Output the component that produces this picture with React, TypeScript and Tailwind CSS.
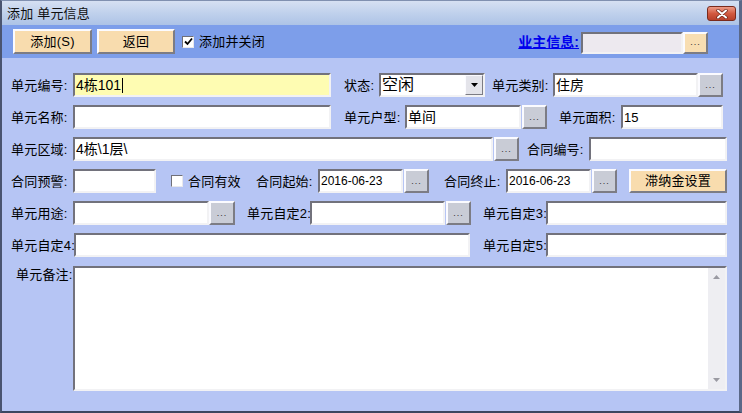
import React from 'react';

const inset =
  'border-2 border-t-[#72727c] border-l-[#72727c] border-b-[#f2f2f4] border-r-[#f2f2f4]';
const raised =
  'border-2 border-t-[#fbfbff] border-l-[#fbfbff] border-b-[#7c7c84] border-r-[#7c7c84]';

const Label: React.FC<{ className: string; children: React.ReactNode }> = ({ className, children }) => (
  <div className={`shrink-0 whitespace-nowrap text-[13px] leading-none tracking-[0.2px] text-black ${className}`}>
    {children}
  </div>
);

const TextBox: React.FC<{ className: string; children?: React.ReactNode }> = ({ className, children }) => (
  <div className={`flex h-full shrink-0 items-center overflow-hidden whitespace-nowrap pl-[1px] leading-none text-black ${inset} ${className}`}>
    {children}
  </div>
);

const Dots: React.FC<{ className?: string; peach?: boolean }> = ({ className = '', peach }) => (
  <div
    className={`flex h-full shrink-0 items-end justify-center pb-[5px] text-[9px] leading-none tracking-[1px] text-[#303030] ${raised} ${
      peach ? 'bg-[#f8deb2]' : 'bg-[#c9ccd6]'
    } ${className}`}
  >
    ...
  </div>
);

const CheckBox: React.FC<{ checked?: boolean }> = ({ checked }) => (
  <div className="flex h-[12px] w-[12px] shrink-0 items-center justify-center border-[1.5px] border-t-[#707078] border-l-[#707078] border-b-[#e8e8ec] border-r-[#e8e8ec] bg-white">
    {checked && (
      <svg width="9" height="9" viewBox="0 0 9 9">
        <path d="M1 4.5 L3.5 7 L8 1.5" fill="none" stroke="#000" strokeWidth="1.8" />
      </svg>
    )}
  </div>
);

export default function App() {
  return (
    <div className="flex h-[413px] w-[742px] flex-col overflow-hidden border-b-2 border-l-2 border-r-[3px] border-t border-b-[#3c4660] border-l-[#4a5470] border-r-[#5a6888] border-t-[#8090b0] bg-[#b6c5f4] font-['Liberation_Sans','Noto_Sans_CJK_SC',sans-serif]">
      {/* title bar */}
      <div className="flex h-[24px] shrink-0 items-start justify-between bg-gradient-to-b from-[#d6e0f2] via-[#c0d1ec] to-[#adc3e6]">
        <div className="pl-[5px] pt-[6px] text-[13px] leading-none tracking-[0.2px] text-[#101010]">添加 单元信息</div>
        <div className="mr-[3px] mt-[5px] flex h-[15px] w-[29px] items-center justify-center rounded-[3px] border border-[#7a2a1c] bg-gradient-to-b from-[#ec9a86] via-[#d25a40] to-[#b8402a]">
          <svg width="12" height="10" viewBox="0 0 12 10">
            <path d="M2 1.5 L10 8.5 M10 1.5 L2 8.5" stroke="#6a2418" strokeWidth="3.4" strokeLinecap="round" />
            <path d="M2 1.5 L10 8.5 M10 1.5 L2 8.5" stroke="#ffffff" strokeWidth="2" strokeLinecap="round" />
          </svg>
        </div>
      </div>

      {/* toolbar */}
      <div className="flex h-[33px] shrink-0 items-start bg-[#7d9eea] pl-[11px] pt-[4px]">
        <div className={`flex h-[25px] w-[79px] items-center justify-center bg-[#f8dcae] text-[13px] tracking-[0.2px] ${raised}`}>
          添加(S)
        </div>
        <div className={`ml-[5px] flex h-[25px] w-[78px] items-center justify-center bg-[#f8dcae] text-[13px] tracking-[0.2px] ${raised}`}>
          返回
        </div>
        <div className="ml-[7px] flex h-[25px] items-center gap-[5px]">
          <CheckBox checked />
          <span className="text-[13px] leading-none tracking-[0.2px]">添加并关闭</span>
        </div>
        <div className="flex-1" />
        <div className="flex h-[22px] items-center pt-[3px]">
          <span className="mr-[2px] text-[14px] font-bold leading-none text-[#0000ee] underline">业主信息:</span>
        </div>
        <div className="mt-[3px] flex h-[22px]">
          <TextBox className="w-[102px] bg-[#ede9ef]" />
          <Dots peach className="w-[25px]" />
        </div>
        <div className="w-[31px]" />
      </div>

      {/* form */}
      <div className="flex flex-1 flex-col gap-[8px] pl-[9px] pt-[15px]">
        {/* row 1 */}
        <div className="flex h-[24px] items-center">
          <Label className="w-[62px]">单元编号:</Label>
          <TextBox className="w-[258px] bg-[#fefcb2] text-[14px]">
            4栋101<span className="ml-[1px] inline-block h-[15px] w-[1px] bg-black" />
          </TextBox>
          <Label className="ml-[13px] w-[35px]">状态:</Label>
          <div className={`flex h-full w-[106px] shrink-0 items-center bg-white ${inset}`}>
            <span className="flex-1 pl-[1px] text-[16px] leading-none">空闲</span>
            <div className="flex h-full w-[18px] items-center justify-center border-[1.5px] border-t-[#fbfbff] border-l-[#fbfbff] border-b-[#7c7c84] border-r-[#7c7c84] bg-[#e4e4ea]">
              <svg width="7" height="4" viewBox="0 0 7 4">
                <path d="M0 0 H7 L3.5 4 Z" fill="#000" />
              </svg>
            </div>
          </div>
          <Label className="ml-[7px] w-[61px]">单元类别:</Label>
          <TextBox className="w-[145px] bg-white text-[14px]">住房</TextBox>
          <Dots className="w-[25px]" />
        </div>

        {/* row 2 */}
        <div className="flex h-[24px] items-center">
          <Label className="w-[62px]">单元名称:</Label>
          <TextBox className="w-[258px] bg-white" />
          <Label className="ml-[13px] w-[61px]">单元户型:</Label>
          <TextBox className="w-[116px] bg-white text-[14px]">单间</TextBox>
          <Dots className="ml-[1px] w-[25px]" />
          <Label className="ml-[12px] w-[62px]">单元面积:</Label>
          <TextBox className="w-[102px] bg-white text-[13px]">15</TextBox>
        </div>

        {/* row 3 */}
        <div className="flex h-[24px] items-center">
          <Label className="w-[62px]">单元区域:</Label>
          <TextBox className="w-[420px] bg-white text-[14px]">4栋\1层\</TextBox>
          <Dots className="ml-[1px] w-[25px]" />
          <Label className="ml-[8px] w-[62px]">合同编号:</Label>
          <TextBox className="w-[138px] bg-white" />
        </div>

        {/* row 4 */}
        <div className="flex h-[24px] items-center">
          <Label className="w-[62px]">合同预警:</Label>
          <TextBox className="w-[83px] bg-white" />
          <div className="ml-[15px] flex w-[85px] shrink-0 items-center gap-[5px]">
            <CheckBox />
            <span className="text-[13px] leading-none tracking-[0.2px]">合同有效</span>
          </div>
          <Label className="w-[62px]">合同起始:</Label>
          <TextBox className="w-[85px] bg-white text-[12px]">2016-06-23</TextBox>
          <Dots className="ml-[1px] w-[25px]" />
          <Label className="ml-[15px] w-[62px]">合同终止:</Label>
          <TextBox className="w-[85px] bg-white text-[12px]">2016-06-23</TextBox>
          <Dots className="ml-[1px] w-[25px]" />
          <div className={`ml-[12px] flex h-full w-[98px] shrink-0 items-center justify-center bg-[#f8dcae] text-[13px] tracking-[0.2px] ${raised}`}>
            滞纳金设置
          </div>
        </div>

        {/* row 5 */}
        <div className="flex h-[24px] items-center">
          <Label className="w-[62px]">单元用途:</Label>
          <TextBox className="w-[136px] bg-white" />
          <Dots className="w-[26px]" />
          <Label className="ml-[12px] w-[63px]">单元自定2:</Label>
          <TextBox className="w-[135px] bg-white" />
          <Dots className="ml-[1px] w-[25px]" />
          <Label className="ml-[12px] w-[63px]">单元自定3:</Label>
          <TextBox className="w-[181px] bg-white" />
        </div>

        {/* row 6 */}
        <div className="flex h-[24px] items-center">
          <Label className="w-[63px]">单元自定4:</Label>
          <TextBox className="w-[396px] bg-white" />
          <Label className="ml-[13px] w-[63px]">单元自定5:</Label>
          <TextBox className="w-[181px] bg-white" />
        </div>

        {/* notes */}
        <div className="mt-[1px] flex items-start">
          <Label className="w-[62px] pl-[5px] pt-[2px]">单元备注:</Label>
          <div className={`flex h-[125px] w-[654px] shrink-0 bg-white ${inset}`}>
            <div className="flex-1" />
            <div className="flex w-[17px] flex-col items-center justify-between bg-[#eeeef2] py-[7px]">
              <svg width="7" height="4" viewBox="0 0 7 4">
                <path d="M0 4 H7 L3.5 0 Z" fill="#9a9aa2" />
              </svg>
              <svg width="7" height="4" viewBox="0 0 7 4">
                <path d="M0 0 H7 L3.5 4 Z" fill="#9a9aa2" />
              </svg>
            </div>
          </div>
        </div>
      </div>
    </div>
  );
}
